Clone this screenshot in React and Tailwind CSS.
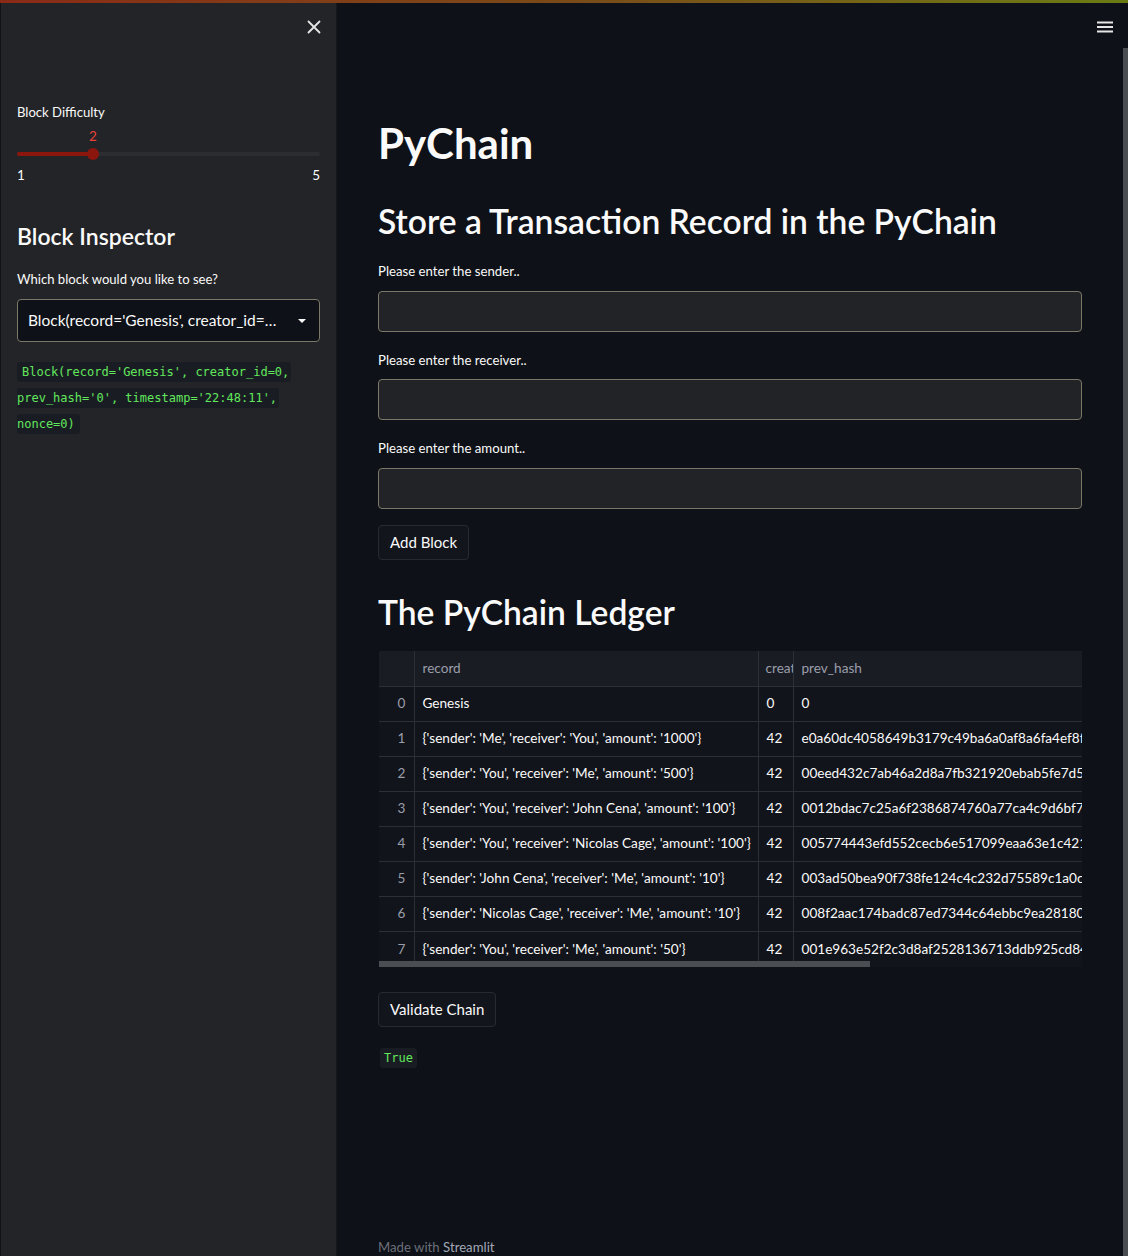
import React from "react";

const rows = [
  ["0", "Genesis", "0", "0"],
  ["1", "{'sender': 'Me', 'receiver': 'You', 'amount': '1000'}", "42", "e0a60dc4058649b3179c49ba6a0af8a6fa4ef8fd55b2"],
  ["2", "{'sender': 'You', 'receiver': 'Me', 'amount': '500'}", "42", "00eed432c7ab46a2d8a7fb321920ebab5fe7d507a3c1"],
  ["3", "{'sender': 'You', 'receiver': 'John Cena', 'amount': '100'}", "42", "0012bdac7c25a6f2386874760a77ca4c9d6bf75a8e21"],
  ["4", "{'sender': 'You', 'receiver': 'Nicolas Cage', 'amount': '100'}", "42", "005774443efd552cecb6e517099eaa63e1c421c67d90"],
  ["5", "{'sender': 'John Cena', 'receiver': 'Me', 'amount': '10'}", "42", "003ad50bea90f738fe124c4c232d75589c1a0cc46f77"],
  ["6", "{'sender': 'Nicolas Cage', 'receiver': 'Me', 'amount': '10'}", "42", "008f2aac174badc87ed7344c64ebbc9ea2818031b4a2"],
  ["7", "{'sender': 'You', 'receiver': 'Me', 'amount': '50'}", "42", "001e963e52f2c3d8af2528136713ddb925cd847914c3"],
];

const sans = { fontFamily: "'Source Sans Pro', Lato, 'Noto Sans', sans-serif" };
const mono = { fontFamily: "'DejaVu Sans Mono', 'Liberation Mono', monospace" };

function Input() {
  return <div className="h-[41px] w-full rounded-[4px] border border-[#7a7866] bg-[#222326]" />;
}

export default function App() {
  return (
    <div className="relative flex h-[1256px] w-[1128px] overflow-hidden bg-[#0e1117] text-[#fafafa]" style={sans}>
      {/* top decoration */}
      <div className="absolute left-0 top-0 z-10 h-[3px] w-full bg-gradient-to-r from-[#8a2a16] via-[#7a4a18] to-[#6a7c14]" />

      {/* sidebar */}
      <aside className="flex w-[337px] shrink-0 flex-col border-l border-r border-l-[#111216] border-r-[#17181c] bg-[#232427] pl-[16px] pr-[16px]">
        <div className="flex justify-end pt-[19px]">
          <svg width="16" height="16" viewBox="0 0 16 16" className="-mr-[2px]">
            <path d="M2.5 2.5 L13.5 13.5 M13.5 2.5 L2.5 13.5" stroke="#e6e6e6" strokeWidth="1.8" strokeLinecap="round" />
          </svg>
        </div>
        <div className="mt-[67px] text-[13.1px] leading-[20px] text-[#fafafa]">Block Difficulty</div>
        <div className="relative mt-[2px] h-[50px]">
          <div className="absolute left-[71px] top-[2px] w-[10px] text-center text-[13.5px] leading-[20px] text-[#e8413a]">2</div>
          <div className="absolute left-0 right-0 top-[28px] h-[4px] rounded-full bg-[#2c2d31]" />
          <div className="absolute left-0 top-[28px] h-[4px] w-[76px] rounded-full bg-[#8b160e]" />
          <div className="absolute left-[70px] top-[24px] h-[12px] w-[12px] rounded-full bg-[#8b160e]" />
          <div className="absolute left-0 top-[41px] text-[13.5px] leading-[20px]">1</div>
          <div className="absolute right-0 top-[41px] text-[13.5px] leading-[20px]">5</div>
        </div>
        <h2 className="mt-[46px] text-[23px] font-semibold leading-[32px]">Block Inspector</h2>
        <div className="mt-[17px] text-[13.1px] leading-[20px]">Which block would you like to see?</div>
        <div className="mt-[10px] flex h-[43px] items-center justify-between rounded-[4px] border border-[#7a7866] bg-[#0e1117] pl-[10px] pr-[12px]">
          <span className="text-[15.5px]">Block(record='Genesis', creator_id=…</span>
          <svg width="10" height="6" viewBox="0 0 10 6"><path d="M1 1 L5 5 L9 1 Z" fill="#fafafa" /></svg>
        </div>
        <div className="mt-[17px] text-[12px] leading-[26px] text-[#62e85c]" style={mono}>
          <span className="rounded-[3px] bg-[#1a1c24] py-[3px] pl-[5px] pr-[2px]">Block(record='Genesis', creator_id=0,</span>
          <br />
          <span className="rounded-[3px] bg-[#1a1c24] py-[3px] pr-[2px]">prev_hash='0', timestamp='22:48:11',</span>
          <br />
          <span className="rounded-[3px] bg-[#1a1c24] py-[3px] pr-[5px]">nonce=0)</span>
        </div>
      </aside>

      {/* main */}
      <main className="relative flex flex-1 flex-col">
        <div className="absolute right-[10px] top-[21px]">
          <svg width="16" height="12" viewBox="0 0 16 12">
            <rect x="0" y="0.5" width="16" height="2" fill="#e6e6e6" />
            <rect x="0" y="5" width="16" height="2" fill="#e6e6e6" />
            <rect x="0" y="9.5" width="16" height="2" fill="#e6e6e6" />
          </svg>
        </div>
        <div className="flex flex-1 flex-col px-[41px]">
          <h1 className="mt-[115px] text-[42px] font-bold leading-[56px]">PyChain</h1>
          <h2 className="mt-[27px] text-[33.6px] font-semibold leading-[46px]">Store a Transaction Record in the PyChain</h2>
          <div className="mt-[17px] text-[13.2px] leading-[20px]">Please enter the sender..</div>
          <div className="mt-[10px]"><Input /></div>
          <div className="mt-[18px] text-[13.2px] leading-[20px]">Please enter the receiver..</div>
          <div className="mt-[9px]"><Input /></div>
          <div className="mt-[18px] text-[13.2px] leading-[20px]">Please enter the amount..</div>
          <div className="mt-[10px]"><Input /></div>
          <div className="mt-[16px]">
            <button className="h-[35px] rounded-[4px] border border-[#262a33] bg-[#13151d] px-[11px] text-[15px]">Add Block</button>
          </div>
          <h2 className="mt-[29px] text-[33.6px] font-semibold leading-[46px]">The PyChain Ledger</h2>
          <div className="ml-[1px] mt-[16px] w-[703px] overflow-hidden bg-[#12141b]">
            <table className="border-collapse text-[13.6px]" style={{ tableLayout: "fixed", width: 1000 }}>
              <colgroup>
                <col style={{ width: 35 }} />
                <col style={{ width: 344 }} />
                <col style={{ width: 35 }} />
                <col style={{ width: 586 }} />
              </colgroup>
              <thead>
                <tr className="h-[35px] bg-[#1a1c24] text-[#9a9eaa]">
                  <th className="border-b border-r border-[#2c2f36]" />
                  <th className="border-b border-r border-[#2c2f36] pl-[8px] text-left font-normal">record</th>
                  <th className="overflow-hidden whitespace-nowrap border-b border-r border-[#2c2f36] pl-[7px] text-left font-normal">creat</th>
                  <th className="border-b border-[#2c2f36] pl-[8px] text-left font-normal">prev_hash</th>
                </tr>
              </thead>
              <tbody>
                {rows.map((r, i) => (
                  <tr key={i} className="h-[35px]">
                    <td className={`border-r border-[#2c2f36] pr-[8px] text-right text-[#9a9eaa] ${i < 7 ? "border-b" : ""}`}>{r[0]}</td>
                    <td className={`whitespace-nowrap border-r border-[#2c2f36] pl-[8px] ${i < 7 ? "border-b" : ""}`}>{r[1]}</td>
                    <td className={`whitespace-nowrap border-r border-[#2c2f36] pl-[8px] ${i < 7 ? "border-b" : ""}`}>{r[2]}</td>
                    <td className={`overflow-hidden whitespace-nowrap border-[#2c2f36] pl-[8px] ${i < 7 ? "border-b" : ""}`}>{r[3]}</td>
                  </tr>
                ))}
              </tbody>
            </table>
            <div className="relative -mt-[5px] h-[6px] w-full">
              <div className="h-[6px] w-[491px] bg-[#4a4d52]" />
            </div>
          </div>
          <div className="mt-[25px]">
            <button className="h-[35px] rounded-[4px] border border-[#262a33] bg-[#13151d] px-[11px] text-[15px]">Validate Chain</button>
          </div>
          <div className="mt-[17px]">
            <span className="ml-[2px] rounded-[3px] bg-[#1a1c24] px-[4px] py-[3px] text-[12px] text-[#62e85c]" style={mono}>True</span>
          </div>
          <div className="mt-auto text-[13.2px] leading-[18px] text-[#6b6f7a]">
            Made with <span className="text-[#a3a8b8]">Streamlit</span>
          </div>
        </div>
      </main>

      {/* scrollbar */}
      <div className="flex w-[6px] shrink-0 flex-col bg-[#0e1117]">
        <div className="mt-[48px] flex-1 bg-[#4a4d52]" />
      </div>
    </div>
  );
}
